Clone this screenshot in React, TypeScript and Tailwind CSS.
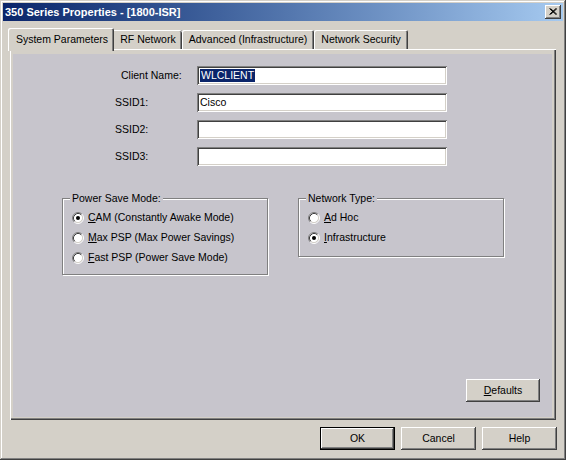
import React from "react"

const raised =
    "shadow-[inset_-1px_-1px_#404040,inset_1px_1px_#ffffff,inset_-2px_-2px_#808080,inset_2px_2px_#d4d0c8]"
const sunken =
    "shadow-[inset_1px_1px_#808080,inset_-1px_-1px_#ffffff,inset_2px_2px_#404040,inset_-2px_-2px_#d4d0c8]"

function Radio({ checked }: { checked?: boolean }) {
    return (
        <svg width="12" height="12" viewBox="0 0 12 12" className="shrink-0">
            <circle cx="6" cy="6" r="4.5" fill="#ffffff" />
            <path d="M2.11 9.89 A5.5 5.5 0 0 1 9.89 2.11" stroke="#808080" fill="none" />
            <path d="M9.89 2.11 A5.5 5.5 0 0 1 2.11 9.89" stroke="#ffffff" fill="none" />
            <path d="M2.82 9.18 A4.5 4.5 0 0 1 9.18 2.82" stroke="#404040" fill="none" />
            <path d="M9.18 2.82 A4.5 4.5 0 0 1 2.82 9.18" stroke="#d4d0c8" fill="none" />
            {checked && <circle cx="6" cy="6" r="2" fill="#000000" />}
        </svg>
    )
}

function Option({ checked, keyChar, rest }: { checked?: boolean; keyChar: string; rest: string }) {
    return (
        <div className="flex h-[20px] items-center gap-[4px]">
            <Radio checked={checked} />
            <span>
                <span className="underline underline-offset-[1px]">{keyChar}</span>
                {rest}
            </span>
        </div>
    )
}

function GroupBox({ title, className, children }: { title: string; className: string; children: React.ReactNode }) {
    return (
        <div className={`relative border border-[#808080] shadow-[inset_1px_1px_#ffffff,1px_1px_#ffffff] pl-[9px] pt-[9px] ${className}`}>
            <span className="absolute left-[7px] top-[-8px] bg-[#c7c5cc] px-[2px] leading-[14px]">{title}</span>
            {children}
        </div>
    )
}

function Field({ label, value, selected, indent }: { label: string; value?: string; selected?: boolean; indent?: boolean }) {
    return (
        <div className="flex h-[19px] items-center">
            <span className={`w-[82px] ${indent ? "pl-[6px]" : ""}`}>{label}</span>
            <div className={`flex h-[19px] w-[250px] items-center bg-white pl-[3px] ${sunken}`}>
                {value && (
                    <span className={selected ? "bg-[#0a246a] px-[1px] leading-[13px] text-white" : "leading-[13px]"}>{value}</span>
                )}
            </div>
        </div>
    )
}

function Button({ children, isDefault, className }: { children: React.ReactNode; isDefault?: boolean; className?: string }) {
    return (
        <div className={`${isDefault ? "border border-black" : ""} h-[23px] w-[75px] ${className ?? ""}`}>
            <div className={`flex h-full w-full items-center justify-center bg-[#d4d0c8] ${raised}`}>{children}</div>
        </div>
    )
}

export default function App() {
    return (
        <div
            className={`flex h-[460px] w-[566px] flex-col bg-[#d4d0c8] p-[3px] text-[10.5px] text-black shadow-[inset_-1px_-1px_#404040,inset_1px_1px_#d4d0c8,inset_-2px_-2px_#808080,inset_2px_2px_#ffffff]`}
            style={{ fontFamily: '"Liberation Sans", Arial, sans-serif' }}
        >
            {/* title bar */}
            <div className="flex h-[18px] items-center justify-between bg-linear-to-r from-[#0a246a] to-[#a6caf0] pl-[2px] pr-[2px]">
                <span className="text-[11px] font-bold text-white">350 Series Properties - [1800-ISR]</span>
                <div className={`flex h-[14px] w-[16px] items-center justify-center bg-[#d4d0c8] ${raised}`}>
                    <svg width="8" height="7" viewBox="0 0 8 7" className="mb-[1px]">
                        <path d="M0.5 0.5 L7 6.5 M1.5 0.5 L8 6.5 M7 0.5 L0.5 6.5 M8 0.5 L1.5 6.5" stroke="#000" strokeWidth="1" />
                    </svg>
                </div>
            </div>

            {/* tabs */}
            <div className="relative z-10 mt-[7px] flex h-[21px] items-end pl-[5px]">
                <div className="mb-[-2px] flex h-[23px] w-[106px] items-start justify-center rounded-tl-[2px] rounded-tr-[2px] bg-[#d4d0c8] pl-[2px] pt-[4px] shadow-[inset_1px_1px_#ffffff,inset_-1px_0_#404040,inset_-2px_0_#808080]">
                    System Parameters
                </div>
                <div className="flex h-[19px] w-[68px] items-center justify-center rounded-tr-[2px] pt-[1px] shadow-[inset_0_1px_#ffffff,inset_-1px_0_#404040,inset_-2px_0_#808080]">
                    RF Network
                </div>
                <div className="flex h-[19px] w-[132px] items-center justify-center rounded-tl-[2px] rounded-tr-[2px] pt-[1px] shadow-[inset_1px_1px_#ffffff,inset_-1px_0_#404040,inset_-2px_0_#808080]">
                    Advanced (Infrastructure)
                </div>
                <div className="flex h-[19px] w-[94px] items-center justify-center rounded-tl-[2px] rounded-tr-[2px] pt-[1px] shadow-[inset_1px_1px_#ffffff,inset_-1px_0_#404040,inset_-2px_0_#808080]">
                    Network Security
                </div>
            </div>

            {/* tab page */}
            <div className="ml-[7px] flex h-[371px] w-[546px] flex-col pb-[3px] pl-[3px] pr-[4px] pt-[5px] shadow-[inset_1px_1px_#ffffff,inset_-1px_-1px_#404040,inset_-2px_-2px_#808080]">
                <div className="flex flex-1 flex-col bg-[#c7c5cc] pl-[102px] pt-[12px]">
                    <div className="flex flex-col gap-[8px]">
                        <Field label="Client Name:" value="WLCLIENT" selected indent />
                        <Field label="SSID1:" value="Cisco" />
                        <Field label="SSID2:" />
                        <Field label="SSID3:" />
                    </div>

                    <div className="ml-[-53px] mt-[32px] flex items-start gap-[30px]">
                        <GroupBox title="Power Save Mode:" className="h-[77px] w-[206px]">
                            <Option checked keyChar="C" rest="AM (Constantly Awake Mode)" />
                            <Option keyChar="M" rest="ax PSP (Max Power Savings)" />
                            <Option keyChar="F" rest="ast PSP (Power Save Mode)" />
                        </GroupBox>
                        <GroupBox title="Network Type:" className="h-[59px] w-[206px]">
                            <Option keyChar="A" rest="d Hoc" />
                            <Option checked keyChar="I" rest="nfrastructure" />
                        </GroupBox>
                    </div>

                    <div className="mb-[15px] mt-auto flex justify-end pr-[12px]">
                        <Button className="!w-[74px]">
                            <span>
                                <span className="underline underline-offset-[1px]">D</span>efaults
                            </span>
                        </Button>
                    </div>
                </div>
            </div>

            {/* dialog buttons */}
            <div className="mt-[7px] flex justify-end gap-[6px] pr-[6px]">
                <Button isDefault>OK</Button>
                <Button>Cancel</Button>
                <Button>Help</Button>
            </div>
        </div>
    )
}
